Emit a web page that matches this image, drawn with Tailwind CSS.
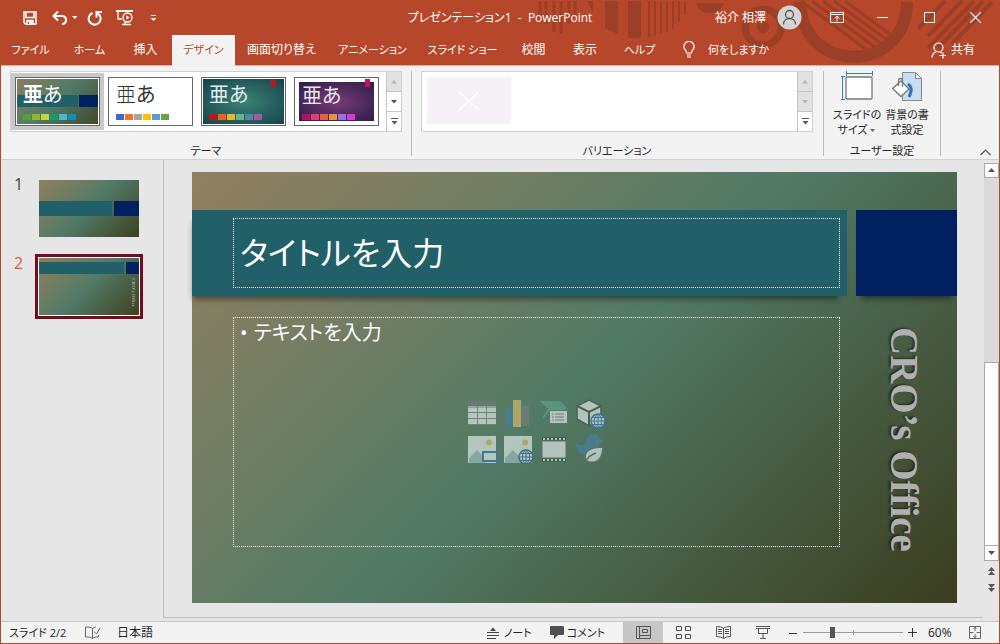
<!DOCTYPE html>
<html lang="ja">
<head>
<meta charset="utf-8">
<meta name="viewport" content="width=device-width, initial-scale=1">
<title>プレゼンテーション1 - PowerPoint</title>
<script src="https://cdn.jsdelivr.net/npm/@tailwindcss/browser@4"></script>
</head>
<body class="h-screen overflow-hidden bg-[#e6e6e6] font-['Open_Sans','Noto_Sans_CJK_JP',sans-serif] text-xs text-[#262626] [font-feature-settings:'palt']">
<div class="flex h-full flex-col border-x border-b border-[#b7472a]">

  <header class="relative shrink-0 bg-[#b7472a] text-white">
    <!-- Title bar ornament -->
    <svg class="absolute top-0 right-0 h-[65px] w-[470px]" viewBox="529 0 470 65" fill="none" stroke="#9c3f27" aria-hidden="true">
      <g stroke-width="3"><path d="M540 1v17M546 1v23M554 1v31M561 1v33M569 1v23M575 1v14"/></g>
      <path d="M587 1h6v12z" fill="#9c3f27" stroke="none"/>
      <path d="M605 1h13v33l-13-6z" fill="#9c3f27" stroke="none"/>
      <path d="M628 1h13v37h-13z" fill="#9c3f27" stroke="none"/>
      <g stroke-width="2"><path d="M649 1v36M655 1v35M661 1v32M667 1v31M673 1v28M679 1v21M685 1v14"/></g>
      <path d="M696 3h28q-3 10-14 10q-12 0-14-10z" fill="#9c3f27" stroke="none"/>
      <circle cx="763" cy="27" r="18" stroke-width="7"/><circle cx="763" cy="27" r="6" fill="#9c3f27" stroke="none"/>
      <path d="M800 2C802 75 906 75 907 2" stroke-width="12"/>
      <g stroke-width="3"><path d="M812 1l63 46M823 1l59 43M834 1l53 39M845 1l46 34M801 1l66 49"/></g>
      <g stroke-width="4"><path d="M928 36l34-35M928 48l46-47M938 48l45-47M952 44l40-42M945 1l-27 28"/></g>
    </svg>

    <div class="relative grid h-[35px] grid-cols-[1fr_auto_1fr] items-center">
      <div class="flex items-center pl-[21px]">
        <button aria-label="上書き保存" class="w-[29px]"><svg width="16" height="16" viewBox="0 0 16 16" fill="none" stroke="#fff" stroke-width="1.500"><path d="M2 2h12v12H3.500L2 12.500z"/><path d="M4 2.500V7.500h8V2.500"/><path d="M5 10.500h6V14H5z" fill="#fff"/><path d="M6.500 12v2" stroke="#b7472a"/></svg></button>
        <button aria-label="元に戻す" class="w-[21px]"><svg width="18" height="16" viewBox="0 0 18 16" fill="none" stroke="#fff" stroke-width="2"><path d="M7 1.500L2.500 6L7 10.500M3 6h7.500c6 0 6 8 .5 8"/></svg></button>
        <button aria-label="元に戻す履歴" class="w-[15px]"><svg width="6" height="4" viewBox="0 0 6 4" fill="#fff"><path d="M0 0h5.500L2.750 3z"/></svg></button>
        <button aria-label="やり直し" class="w-[29px]"><svg width="16" height="16" viewBox="0 0 16 16" fill="none" stroke="#fff" stroke-width="2"><path d="M5.500 3A6 6 0 1 0 12 4.500L10 2.500"/><path d="M9.500 7.500V2H15"/></svg></button>
        <button aria-label="先頭から開始" class="w-[34px]"><svg width="18" height="17" viewBox="0 0 18 17" fill="none" stroke="#fff" stroke-width="1.300"><path d="M0 2h17" stroke-width="2"/><path d="M2 3v7h4M6 15.500h9M9 13v2.500"/><circle cx="11.500" cy="8.500" r="4.500"/><path d="M10.300 6.200v4.600l3.500-2.300z" fill="#fff" stroke="none"/></svg></button>
        <button aria-label="クイック アクセス ツール バーのユーザー設定"><svg width="7" height="8" viewBox="0 0 7 8" fill="#fff"><path d="M1 1h5v1H1zM0.500 4h6L3.500 7z"/></svg></button>
      </div>
      <h1 class="whitespace-pre">プレゼンテーション1  -  PowerPoint</h1>
      <div class="flex items-center justify-end">
        <button class="mr-[14px] flex items-center gap-[11px]"><span>裕介 相澤</span>
          <svg width="25" height="25" viewBox="0 0 25 25" fill="none" stroke="#555" stroke-width="1.300"><circle cx="12.500" cy="12.500" r="12" fill="#d4d4d4" stroke="none"/><circle cx="12.500" cy="9.500" r="4"/><path d="M6.500 19.500c0-8 12-8 12 0"/></svg></button>
        <button aria-label="リボンの表示オプション" class="flex w-[41px] justify-center"><svg width="14" height="12" viewBox="0 0 14 12" fill="none" stroke="#fff"><path d="M.5.500h13v10H.500zM.5 2.500h13M7 9.500V4.500M4.500 6.500L7 4l2.500 2.500"/></svg></button>
        <button aria-label="最小化" class="flex w-[51px] justify-center"><svg width="11" height="11" stroke="#fff"><path d="M0 5.500h11"/></svg></button>
        <button aria-label="最大化" class="mr-0.5 flex w-[42px] justify-center"><svg width="11" height="11" fill="none" stroke="#fff"><path d="M.5.500h10v10H.500z"/></svg></button>
        <button aria-label="閉じる" class="flex w-[47px] justify-center"><svg width="11" height="11" stroke="#fff" stroke-width="1.200"><path d="M0 0l11 11M11 0L0 11"/></svg></button>
      </div>
    </div>

    <nav class="relative flex h-[30px] items-stretch" aria-label="リボン タブ">
      <button class="w-[59px] text-[11px]">ファイル</button>
      <button class="w-[59px] text-[11px]">ホーム</button>
      <button class="w-[53px]">挿入</button>
      <button class="relative z-10 -mb-px w-[63px] bg-[#f3f3f3] text-[11px] text-[#b7472a]">デザイン</button>
      <button class="w-[93px]">画面切り替え</button>
      <button class="w-[89px] text-[11px]">アニメーション</button>
      <button class="w-[91px] text-[11px]">スライド ショー</button>
      <button class="w-[51px]">校閲</button>
      <button class="w-[52px]">表示</button>
      <button class="w-[57px] text-[11px]">ヘルプ</button>
      <button class="ml-[15px] flex items-center gap-[13px] text-[11px]">
        <svg width="12" height="18" viewBox="0 0 12 18" fill="none" stroke="#fff" stroke-width="1.200"><path d="M3.500 12c0-3-2.700-3.500-2.700-6.300a5.200 5.200 0 0 1 10.400 0C11.200 8.500 8.500 9 8.500 12zM4 14h4M4 16h4"/></svg>何をしますか</button>
      <button class="mr-[24px] ml-auto flex items-center gap-1">
        <svg width="16" height="17" viewBox="0 0 16 17" fill="none" stroke="#fff" stroke-width="1.200"><circle cx="7.500" cy="5.500" r="4.500"/><path d="M1 15.500c0-3 2-5 4.500-6M9 10l2 1M8.500 13.500h6.500M12 10.500v6"/></svg>共有</button>
    </nav>
  </header>

  <section class="flex h-[95px] shrink-0 border-t border-b border-t-[#eda998] border-b-[#d2d2d2] bg-[#f3f3f3] pt-[5px] pl-[9px]" aria-label="デザイン">
    <div class="flex flex-col">
      <div class="flex h-[61px] border border-[#d0d0d0] bg-white">
        <div class="flex w-[375px]">
          <button class="mt-px h-[57px] w-[93px] bg-[#c9c9c9] p-1" aria-label="現在のテーマ">
            <span class="block h-full border border-[#666] bg-white p-px">
              <span class="relative flex h-full flex-col overflow-hidden bg-linear-135 from-[#887b5e] via-[#4f7a68] to-[#40492a] text-white">
                <span class="absolute inset-x-0 top-4 flex h-3 gap-px"><span class="flex-1 bg-[#216068]"></span><span class="w-[19px] bg-[#002060]"></span></span>
                <span class="relative flex h-[31px] items-center pl-1.5 text-[20px] leading-7"><b>亜</b>あ</span>
                <span class="relative mt-1 flex gap-px pl-1.5"><i class="h-1.5 w-2 bg-[#4ca534]"></i><i class="h-1.5 w-2 bg-[#90b92c]"></i><i class="h-1.5 w-2 bg-[#c7d338]"></i><i class="h-1.5 w-2 bg-[#159b73]"></i><i class="h-1.5 w-2 bg-[#4eb8cf]"></i><i class="h-1.5 w-2 bg-[#168bbd]"></i></span>
              </span>
            </span>
          </button>
          <button class="mt-px h-[57px] w-[93px] p-1" aria-label="Office テーマ">
            <span class="flex h-full flex-col border border-[#666] bg-white p-px text-[#333]">
              <span class="flex h-[31px] items-center pl-1.5 text-[20px] leading-7"><span class="font-light">亜</span>あ</span>
              <span class="mt-1 flex gap-px pl-1.5"><i class="h-1.5 w-2 bg-[#4068c8]"></i><i class="h-1.5 w-2 bg-[#ed7528]"></i><i class="h-1.5 w-2 bg-[#a5a5a5]"></i><i class="h-1.5 w-2 bg-[#ffc000]"></i><i class="h-1.5 w-2 bg-[#5b9bd5]"></i><i class="h-1.5 w-2 bg-[#65a63c]"></i></span>
            </span>
          </button>
          <button class="mt-px h-[57px] w-[93px] p-1" aria-label="イオン">
            <span class="block h-full border border-[#666] bg-white p-px">
              <span class="relative flex h-full flex-col bg-radial from-[#3d8375] to-[#15444c] text-[#e5efed]">
                <i class="absolute top-0 right-2 h-2 w-[5px] bg-[#b81818]"></i>
                <span class="flex h-[31px] items-center pl-1.5 text-[20px] leading-7">亜あ</span>
                <span class="mt-1 flex gap-px pl-1.5"><i class="h-1.5 w-2 bg-[#b81818]"></i><i class="h-1.5 w-2 bg-[#e8651b]"></i><i class="h-1.5 w-2 bg-[#e8b52b]"></i><i class="h-1.5 w-2 bg-[#6bb18d]"></i><i class="h-1.5 w-2 bg-[#5386a5]"></i><i class="h-1.5 w-2 bg-[#9d5c9f]"></i></span>
              </span>
            </span>
          </button>
          <button class="mt-px h-[57px] w-[93px] p-1" aria-label="イオン ボードルーム">
            <span class="block h-full border border-[#666] bg-white px-1 py-1">
              <span class="relative flex h-full flex-col bg-radial from-[#793b76] to-[#2d1d47] text-[#eee4ee]">
                <i class="absolute -top-[3px] right-1 h-2 w-[5px] bg-[#bf0e6c]"></i>
                <span class="flex h-7 items-center pl-[3px] text-[20px] leading-7">亜あ</span>
                <span class="mt-1 flex gap-px pl-[3px]"><i class="h-1.5 w-2 bg-[#b31166]"></i><i class="h-1.5 w-2 bg-[#e33d6f]"></i><i class="h-1.5 w-2 bg-[#e45f3c]"></i><i class="h-1.5 w-2 bg-[#e9943a]"></i><i class="h-1.5 w-2 bg-[#9b6bf2]"></i><i class="h-1.5 w-2 bg-[#d53dd0]"></i></span>
              </span>
            </span>
          </button>
        </div>
        <div class="flex w-[15px] flex-col divide-y divide-[#c6c6c6] border-l border-[#c6c6c6]">
          <button disabled aria-label="前の行" class="flex flex-1 items-center justify-center bg-[#e1e1e1]"><svg width="6" height="4" fill="#b5b5b5"><path d="M0 3.500h6L3 0z"/></svg></button>
          <button aria-label="次の行" class="flex flex-1 items-center justify-center"><svg width="6" height="4" fill="#555"><path d="M0 0h6L3 3.500z"/></svg></button>
          <button aria-label="その他" class="flex flex-1 items-center justify-center"><svg width="7" height="7" fill="#555"><path d="M0 0h7v1H0zM.5 3h6l-3 3.500z"/></svg></button>
        </div>
      </div>
      <p class="mt-[11px] text-center text-[11px] leading-4">テーマ</p>
    </div>
    <div class="mb-[3px] ml-[9px] w-px bg-[#bdbdbd]"></div>
    <div class="ml-[9px] flex flex-1 flex-col">
      <div class="flex h-[61px] border border-[#d0d0d0] bg-white">
        <div class="flex-1 p-[5px]"><button aria-label="バリエーション 1" class="flex h-[47px] w-[84px] items-center justify-center bg-[#f6f1f6]"><svg width="22" height="20" stroke="#fff" stroke-width="1.200"><path d="M1 1l20 18M21 1L1 19"/></svg></button></div>
        <div class="flex w-[15px] flex-col divide-y divide-[#c6c6c6] border-l border-[#c6c6c6]">
          <button disabled aria-label="前の行" class="flex flex-1 items-center justify-center bg-[#e1e1e1]"><svg width="6" height="4" fill="#b5b5b5"><path d="M0 3.500h6L3 0z"/></svg></button>
          <button disabled aria-label="次の行" class="flex flex-1 items-center justify-center bg-[#e1e1e1]"><svg width="6" height="4" fill="#b5b5b5"><path d="M0 0h6L3 3.500z"/></svg></button>
          <button aria-label="その他" class="flex flex-1 items-center justify-center"><svg width="7" height="7" fill="#555"><path d="M0 0h7v1H0zM.5 3h6l-3 3.500z"/></svg></button>
        </div>
      </div>
      <p class="mt-[11px] text-center text-[11px] leading-4">バリエーション</p>
    </div>
    <div class="mb-[3px] ml-[10px] w-px bg-[#bdbdbd]"></div>
    <div class="flex w-[116px] flex-col text-[11px]">
      <div class="flex h-[72px] justify-center gap-[2px] whitespace-nowrap">
        <button class="flex w-12 flex-col items-center">
          <svg width="33" height="32" viewBox="0 0 33 32" fill="none" class="mb-1"><path d="M5 2.500h27M5.500 0v5M31.500 0v5M1.500 6v22M0 5.500h4M0 28.500h4" stroke="#3a7ebf"/><rect x="5" y="6" width="26" height="22" rx="1" fill="#fff" stroke="#777" stroke-width="1.300"/></svg>
          <span class="leading-[15px]">スライドの<br>サイズ <svg class="inline align-middle" width="6" height="4" fill="#666"><path d="M0 0h5L2.500 3z"/></svg></span>
        </button>
        <button class="flex w-12 flex-col items-center">
          <svg width="33" height="32" viewBox="0 0 33 32" fill="none" class="mb-1"><path d="M11.500 1.500h13l6 6v22h-19z" fill="#c6ddf3" stroke="#888"/><path d="M24.500 1.500v6h6z" fill="#fff" stroke="#888"/><path d="M17 13c5 3 3 9 1 13" stroke="#2e75b6" stroke-width="3"/><path d="M1.500 17.500L10 10l8 8-8 7.500z" fill="#fff" stroke="#777" stroke-width="1.300"/><path d="M7.500 15V9.500a2 2 0 0 1 4 0V16" stroke="#777" stroke-width="1.300"/></svg>
          <span class="leading-[15px]">背景の書<br>式設定</span>
        </button>
      </div>
      <p class="text-center leading-4">ユーザー設定</p>
    </div>
    <div class="mb-[3px] w-px bg-[#bdbdbd]"></div>
    <button aria-label="リボンを折りたたむ" class="mr-[8px] mb-[3px] ml-[39px] self-end"><svg width="11" height="7" fill="none" stroke="#555" stroke-width="1.200"><path d="M.5 6L5.500 1l5 5"/></svg></button>
  </section>

  <main class="flex min-h-0 flex-1">
    <aside class="w-[163px] shrink-0 border-r border-[#bcbcbc] pt-[15px]" aria-label="スライド一覧">
      <ol class="text-base">
        <li class="flex items-start">
          <span class="w-[34px] pl-[13px] leading-[18px] text-[#444]">1</span>
          <button aria-label="スライド 1" class="mt-[1px] p-1"><span class="flex h-[57px] w-[100px] flex-col bg-linear-135 from-[#8f7f60] via-[#507a66] to-[#3e4021] pt-[21px]"><span class="flex h-[15px] gap-0.5"><span class="flex-1 bg-[#216068]"></span><span class="w-[25px] bg-[#002060]"></span></span></span></button>
        </li>
        <li class="mt-[13px] flex items-start">
          <span class="w-[34px] pl-[13px] leading-[18px] text-[#e3553d]">2</span>
          <button aria-label="スライド 2" class="border-[3px] border-[#750b1c] bg-white p-px"><span class="flex h-[57px] w-[100px] flex-col bg-linear-135 from-[#8f7f60] via-[#507a66] to-[#3e4021] pt-1"><span class="flex h-3 gap-0.5"><span class="flex-1 bg-[#216068]"></span><span class="w-[13px] bg-[#002060]"></span></span><span class="mt-1 mr-[3px] self-end font-['Liberation_Serif',serif] text-[5px] leading-[6px] font-bold text-[#aaa] [writing-mode:vertical-rl]">CRO’s Office</span></span></button>
        </li>
      </ol>
    </aside>

    <div class="flex min-w-0 flex-1 flex-col border-b border-[#bcbcbc] pt-3 pr-[26px] pl-7">
      <article class="flex h-[431px] flex-col bg-linear-135 from-[#927f60] via-[#517a66] to-[#3b3d1f] pt-[38px] text-white">
        <div class="flex h-[86px] gap-[9px]">
          <div class="flex-1 bg-[#216068] py-2 pr-[7px] pl-[41px] shadow-[-4px_8px_6px_-5px_rgb(0_0_0/0.45)]">
            <h2 class="flex h-full items-center border border-dotted border-white pl-1.5 text-[32px] leading-none">タイトルを入力</h2>
          </div>
          <div class="w-[101px] bg-[#002060] shadow-[0_8px_6px_-5px_rgb(0_0_0/0.45)]"></div>
        </div>
        <div class="mt-[21px] flex h-[230px] pl-[41px]">
          <div class="relative flex-1 border border-dotted border-white pl-1.5">
            <ul class="text-[20px] leading-[30px]"><li class="flex gap-1.5"><span>•</span>テキストを入力</li></ul>
            <div class="absolute top-20 left-[234px] grid grid-cols-4 gap-1.5 opacity-70">
              <button aria-label="表の挿入"><svg width="28" height="30" viewBox="0 0 28 30"><path d="M0 3h28v6H0z" fill="#6d7975"/><path d="M0 8h28v18H0z" fill="#dce6e2"/><path d="M0 9h28M0 14.500h28M0 20.500h28M0 26.500h28M9.500 8v18M18.500 8v18" stroke="#778982"/></svg></button>
              <button aria-label="グラフの挿入"><svg width="28" height="30" viewBox="0 0 28 30"><path d="M2 11h7v17H2z" fill="#437fa5"/><path d="M9 2h8v27H9z" fill="#d2bb69"/><path d="M17 8h8v20h-8z" fill="#727e7c"/></svg></button>
              <button aria-label="SmartArt グラフィックの挿入"><svg width="28" height="30" viewBox="0 0 28 30"><path d="M0 3h20l7 7-2 2H10l-6 8H2l6-9z" fill="#5ba18c"/><path d="M9.500 12.500h18v13h-18z" fill="#dce6e2" stroke="#65736d"/><path d="M12 16h2m1 0h9M12 19h2m1 0h9M12 22h2m1 0h9" stroke="#75877f"/></svg></button>
              <button aria-label="3D モデル"><svg width="30" height="30" viewBox="0 0 30 30"><path d="M1 8L13 2l12 6v13l-12 7-12-7z" fill="#dce6e2" stroke="#4c574f" stroke-width="1.500"/><path d="M1 8l12 6 12-6M13 14v13" fill="none" stroke="#4c574f" stroke-width="2"/><circle cx="22" cy="23" r="7" fill="#dce6e2" stroke="#2d79b8" stroke-width="1.500"/><path d="M15 23h14M22 16v14M16 19.500h12M16 26.500h12M22 16c-5 4-5 10 0 14M22 16c5 4 5 10 0 14" fill="none" stroke="#2d79b8"/></svg></button>
              <button aria-label="図"><svg width="30" height="30" viewBox="0 0 30 30"><path d="M0 2h28v27H0z" fill="#dce6e2"/><path d="M1 29v-5l8-8 8 8v5z" fill="#9bb9bd"/><circle cx="21" cy="8.500" r="3" fill="#d2bb69"/><path d="M15 18h14v9H15z" fill="#dce6e2" stroke="#3678ad" stroke-width="2"/><path d="M19 30h6" stroke="#3678ad" stroke-width="2"/></svg></button>
              <button aria-label="オンライン画像"><svg width="30" height="30" viewBox="0 0 30 30"><path d="M0 2h28v27H0z" fill="#dce6e2"/><path d="M1 29v-5l8-8 8 8v5z" fill="#9bb9bd"/><circle cx="21" cy="8.500" r="3" fill="#d2bb69"/><circle cx="22" cy="23" r="7" fill="#dce6e2" stroke="#376b95" stroke-width="1.500"/><path d="M15 23h14M22 16v14M16 19.500h12M16 26.500h12M22 16c-5 4-5 10 0 14M22 16c5 4 5 10 0 14" fill="none" stroke="#376b95"/></svg></button>
              <button aria-label="ビデオの挿入"><svg width="28" height="30" viewBox="0 0 28 30"><path d="M2 7h24v17H2z" fill="#dce6e2"/><path d="M2 5h24M2 26h24" stroke="#344139" stroke-width="3"/><path d="M3 5h24M3 26h24" stroke="#e7eeeb" stroke-width="2" stroke-dasharray="2 2"/><path d="M2 7h24v17H2z" fill="none" stroke="#647269"/></svg></button>
              <button aria-label="アイコンの挿入"><svg width="30" height="30" viewBox="0 0 30 30"><path d="M0 9c2 2 6 3 9 1 2-1 2-2 2-4 0-8 12-9 13-1l4 2-5 3c1 8-3 10-10 11C5 22-1 16 0 9z" fill="#4580a2"/><path d="M10 27c-4-11 7-14 17-14-1 12-6 18-16 14z" fill="#dce6e2" stroke="#62736a" stroke-width="1.300"/><path d="M8 30c3-7 7-9 12-11" fill="none" stroke="#62736a" stroke-width="1.500"/></svg></button>
            </div>
          </div>
          <p class="mt-2.5 mr-[31px] ml-[42px] w-[44px] font-['Liberation_Serif',serif] text-[39px] leading-[44px] font-bold whitespace-nowrap text-[#b0b0b0] [writing-mode:vertical-rl] text-shadow-[-1px_2px_2px_rgb(0_0_0/0.5)]">CRO’s Office</p>
        </div>
      </article>
    </div>

    <div class="flex w-4 flex-col items-center bg-[#e6e6e6] pt-[3px] pb-[25px]" aria-label="スクロール バー">
      <button aria-label="上へ" class="flex h-[15px] w-[15px] shrink-0 items-center justify-center border border-[#aaa] bg-white"><svg width="7" height="5" fill="#555"><path d="M0 4h7L3.500 0z"/></svg></button>
      <div class="h-[184px] w-[15px] shrink-0 bg-[#dadada]"></div>
      <div class="w-[15px] flex-1 border border-[#aaa] bg-white"></div>
      <button aria-label="下へ" class="flex h-[15px] w-[15px] shrink-0 items-center justify-center border border-t-0 border-[#aaa] bg-white"><svg width="7" height="5" fill="#555"><path d="M0 0h7L3.500 4z"/></svg></button>
      <button aria-label="前のスライド" class="mt-1.5 shrink-0"><svg width="7" height="9" fill="#555"><path d="M0 4h7L3.500 0zM0 8h7L3.500 4z"/></svg></button>
      <button aria-label="次のスライド" class="mt-2 shrink-0"><svg width="7" height="9" fill="#555"><path d="M0 0h7L3.500 4zM0 4h7L3.500 8z"/></svg></button>
    </div>
  </main>

  <footer class="mt-[3px] flex h-[22px] shrink-0 items-stretch border-t border-[#c6c6c6] bg-[#f3f3f3] pr-[18px] pl-2 leading-[21px]">
    <span class="w-[76px] text-[11px]">スライド 2/2</span>
    <button aria-label="スペルチェック" class="w-8"><svg width="16" height="13" viewBox="0 0 16 13" fill="none" stroke="#666"><path d="M7.500 2.500C6 1 3 1 .5 1v10c2.500 0 5 0 7 1.500V2.500C8.500 1.500 10 1 11 1M7.500 12.500c1.500-1.500 4-1.500 6-1.500V9M9 5.500l2.500 2.500L15 2"/></svg></button>
    <button>日本語</button>
    <button class="mr-[18px] ml-auto flex items-center gap-[5px] text-[11px]"><svg width="12" height="12" fill="none" stroke="#444"><path d="M0 5.500h12M0 8.500h12M0 11.500h9"/><path d="M3 4h6L6 .5z" fill="#444" stroke="none"/></svg>ノート</button>
    <button class="mr-[18px] flex items-center gap-[3px] text-[11px]"><svg width="14" height="13" fill="#505050"><path d="M1 0h12q1 0 1 1v7q0 1-1 1H8l-4 4V9H1Q0 9 0 8V1q0-1 1-1z"/></svg>コメント</button>
    <button aria-label="標準" class="flex w-10 items-center justify-center bg-[#c6c6c6]"><svg width="15" height="13" fill="none" stroke="#555"><path d="M.5.500h14v12H.500zM3.500.500v12M3.500 9.500h11M6.500 3.500h5v3h-5z"/></svg></button>
    <button aria-label="スライド一覧" class="flex w-10 items-center justify-center"><svg width="15" height="13" fill="none" stroke="#555"><path d="M.5.500h5v4h-5zM9.500.500h5v4h-5zM.5 8.500h5v4h-5zM9.500 8.500h5v4h-5z"/></svg></button>
    <button aria-label="閲覧表示" class="flex w-10 items-center justify-center"><svg width="15" height="13" fill="none" stroke="#555"><path d="M7.500 2Q5 .5.500.500v10Q5 10.500 7.500 12.500Q10 10.500 14.500 10.500V.500Q10 .5 7.500 2zM7.500 2v10M2 3.500h4M2 5.500h4M2 7.500h4M9 3.500h4M9 5.500h4M9 7.500h4"/></svg></button>
    <button aria-label="スライド ショー" class="flex w-10 items-center justify-center"><svg width="14" height="13" fill="none" stroke="#555"><path d="M0 .5h14M0 2.500h14M2.500 3v4.500h9V3M7 8v4M4 12.500h6"/></svg></button>
    <button aria-label="縮小" class="ml-[6px] flex w-[14px] items-center"><svg width="8" height="8" stroke="#333"><path d="M0 4.500h8"/></svg></button>
    <input type="range" min="0" max="100" value="28" aria-label="ズーム" class="my-auto h-3 w-[100px] appearance-none bg-[linear-gradient(#999,#999),linear-gradient(#999,#999)] bg-[size:100%_1px,1px_5px] bg-center bg-no-repeat [&::-webkit-slider-thumb]:h-[11px] [&::-webkit-slider-thumb]:w-[5px] [&::-webkit-slider-thumb]:appearance-none [&::-webkit-slider-thumb]:bg-[#555]">
    <button aria-label="拡大" class="ml-[5px] flex w-[20px] items-center"><svg width="9" height="9" stroke="#333"><path d="M0 4.500h9M4.500 0v9"/></svg></button>
    <button class="w-[28px] text-left">60%</button>
    <button aria-label="ウィンドウのサイズに合わせる" class="ml-[13px] flex items-center"><svg width="12" height="13" fill="none" stroke="#666"><path d="M.5.500h11v12H.500z"/><path d="M6 1v4M6 8v4M1 6.500h3.500M7.500 6.500H11M4.500 3L6 1.500 7.500 3M4.500 10L6 11.500 7.500 10" /></svg></button>
  </footer>
</div>
</body>
</html>
